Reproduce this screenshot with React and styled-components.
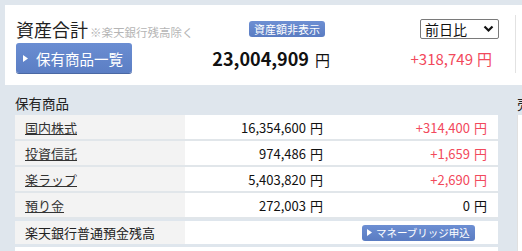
import React from "react";
import styled, { createGlobalStyle } from "styled-components";

const GlobalStyle = createGlobalStyle`
  body {
    margin: 0;
    background: #dfe6ed;
    font-family: "Noto Sans CJK JP", "Noto Sans", sans-serif;
    color: #222;
  }
`;

const Page = styled.div`
  width: 522px;
  height: 251px;
  overflow: hidden;
  display: flex;
  flex-direction: column;
`;

const TopCard = styled.div`
  display: flex;
  margin: 5px 0 0 5px;
  height: 80px;
  background: #fff;
`;

const Summary = styled.div`
  display: grid;
  grid-template-columns: 190px 124px 169px;
  grid-template-rows: 24px 30px;
  row-gap: 2px;
  padding: 12px 0 12px 11px;
`;

const Title = styled.div`
  display: flex;
  align-items: baseline;
  font-size: 18px;
  line-height: 24px;
  color: #222;
  white-space: nowrap;
`;

const Note = styled.span`
  font-size: 11.5px;
  color: #b5b5b5;
  margin-left: 2px;
`;

const SmallButton = styled.span`
  display: inline-flex;
  align-items: center;
  gap: 4px;
  height: ${(p) => p.$h || 16}px;
  padding: 0 ${(p) => p.$px || 5}px;
  border-radius: 3px;
  background: linear-gradient(#6d8fd3, #5a7cc2);
  color: #fff;
  font-size: ${(p) => p.$fs || 11}px;
  white-space: nowrap;
`;

const HideButton = styled(SmallButton)`
  justify-self: end;
  align-self: start;
  margin: 4px 5px 0 0;
`;

const SelectBox = styled.div`
  justify-self: end;
  align-self: start;
  margin-top: 2px;
  box-sizing: border-box;
  width: 79px;
  height: 20px;
  border: 1px solid #7a7a7a;
  border-radius: 2px;
  display: flex;
  align-items: center;
  justify-content: space-between;
  padding: 0 4px 0 4px;
  font-size: 14px;
  color: #111;
`;

const ListButton = styled.span`
  display: inline-flex;
  align-items: center;
  gap: 8px;
  width: 116px;
  height: 30px;
  box-sizing: border-box;
  padding-left: 7px;
  border-radius: 3px;
  background: linear-gradient(#6a8dd2, #5b7ec4);
  box-shadow: 0 1px 0 #4a68a4;
  color: #fff;
  font-size: 14.5px;
  white-space: nowrap;
`;

const Amount = styled.div`
  justify-self: end;
  align-self: center;
  white-space: nowrap;
  color: ${(p) => p.$color || "#111"};
  font-size: 15px;
  margin-right: ${(p) => p.$mr || 0}px;
`;

const Big = styled.b`
  font-size: 18px;
  font-weight: 700;
  margin-right: 6px;
`;

const Yen = styled.span`
  margin-left: 4px;
`;

const Divider = styled.div`
  width: 1px;
  margin: 10px 0 12px 16px;
  background: #e2e2e2;
`;

const Lower = styled.div`
  display: flex;
  gap: 19px;
  padding-left: 15px;
`;

const Holdings = styled.div`
  width: 483px;
  display: flex;
  flex-direction: column;
`;

const Heading = styled.div`
  height: 30px;
  box-sizing: border-box;
  padding-top: 6px;
  display: flex;
  align-items: center;
  font-size: 13.5px;
  color: #222;
  white-space: nowrap;
`;

const Row = styled.div`
  display: grid;
  grid-template-columns: 170px 145px 168px;
  height: 24px;
  border-bottom: 2px solid #e1e6ea;
  font-size: 13px;
  background: #fff;
`;

const Label = styled.div`
  background: #f3f3f3;
  display: flex;
  align-items: center;
  padding-left: 10px;
  white-space: nowrap;
`;

const Link = styled.a`
  color: #333;
  text-decoration: underline;
`;

const Cell = styled.div`
  display: flex;
  align-items: center;
  justify-content: flex-end;
  padding-right: ${(p) => p.$pr}px;
  color: ${(p) => p.$color || "#111"};
  white-space: nowrap;
`;

const BankRow = styled(Row)`
  margin-top: 2px;
  height: 23px;
  border-bottom: none;
  margin-bottom: 3px;
`;

const ButtonCell = styled.div`
  grid-column: 2 / 4;
  display: flex;
  align-items: center;
  padding-left: 177px;
`;

const Side = styled.div`
  flex: 1;
  display: flex;
  flex-direction: column;
`;

const SideBody = styled.div`
  height: 140px;
  background: #fff;
  border-left: 1px solid #e0e0e0;
`;

const Caret = () => (
  <svg width="5" height="7" viewBox="0 0 5 7">
    <path d="M0 0 L5 3.5 L0 7 Z" fill="#fff" />
  </svg>
);

const Chevron = () => (
  <svg width="11" height="8" viewBox="0 0 11 8">
    <path d="M1.5 1.5 L5.5 5.5 L9.5 1.5" fill="none" stroke="#111" strokeWidth="2.2" />
  </svg>
);

const rows = [
  { name: "国内株式", value: "16,354,600", diff: "+314,400", up: true },
  { name: "投資信託", value: "974,486", diff: "+1,659", up: true },
  { name: "楽ラップ", value: "5,403,820", diff: "+2,690", up: true },
  { name: "預り金", value: "272,003", diff: "0", up: false },
];

const RED = "#f2495c";

export default function App() {
  return (
    <Page>
      <GlobalStyle />
      <TopCard>
        <Summary>
          <Title>
            資産合計<Note>※楽天銀行残高除く</Note>
          </Title>
          <HideButton>資産額非表示</HideButton>
          <SelectBox>
            前日比
            <Chevron />
          </SelectBox>
          <ListButton>
            <Caret />
            保有商品一覧
          </ListButton>
          <Amount>
            <Big>23,004,909</Big>円
          </Amount>
          <Amount $color={RED} $mr={7}>
            +318,749<Yen>円</Yen>
          </Amount>
        </Summary>
        <Divider />
      </TopCard>
      <Lower>
        <Holdings>
          <Heading>保有商品</Heading>
          {rows.map((r) => (
            <Row key={r.name}>
              <Label>
                <Link>{r.name}</Link>
              </Label>
              <Cell $pr={7}>
                {r.value}
                <Yen>円</Yen>
              </Cell>
              <Cell $pr={11} $color={r.up ? RED : "#111"}>
                {r.diff}
                <Yen>円</Yen>
              </Cell>
            </Row>
          ))}
          <BankRow>
            <Label>楽天銀行普通預金残高</Label>
            <ButtonCell>
              <SmallButton $h={16} $px={5} $fs={10.5}>
                <Caret />
                マネーブリッジ申込
              </SmallButton>
            </ButtonCell>
          </BankRow>
          <Row />
        </Holdings>
        <Side>
          <Heading>売却</Heading>
          <SideBody />
        </Side>
      </Lower>
    </Page>
  );
}
